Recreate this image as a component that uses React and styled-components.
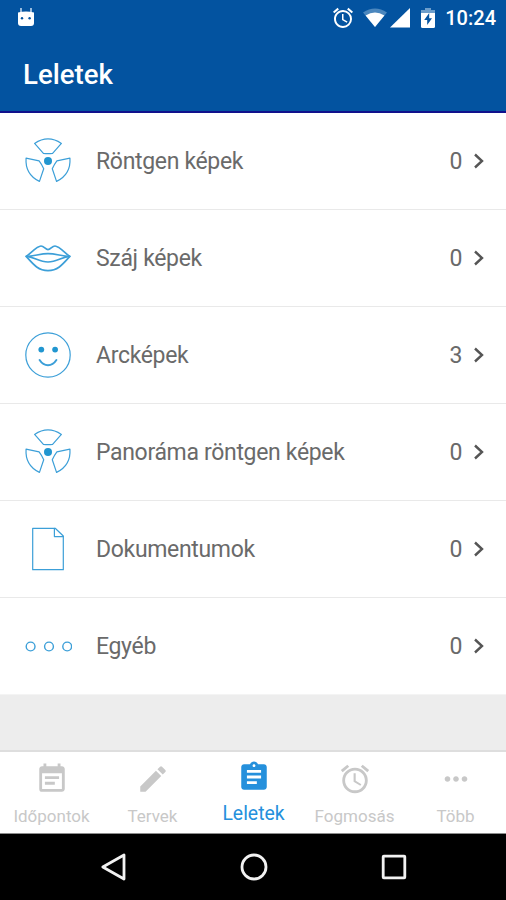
import React, { useState } from 'react'

import styled, { createGlobalStyle } from 'styled-components'
import { MdEventNote, MdEdit, MdAssignment, MdAccessAlarm, MdMoreHoriz } from 'react-icons/md' //Material

const XrayIcon = () => (
  <LineIcon viewBox="-24 -24 48 48">
    {[0, 120, 240].map((deg) => (
      <path key={deg} transform={`rotate(${deg})`} d="M-13.4-17.6Q0-26.6 13.4-17.6L4.6-7.6Q0-7-4.6-7.6Z" />
    ))}
    <circle r="4" fill="#2196d0" stroke="none" />
  </LineIcon>
)

const LipsIcon = () => (
  <LineIcon viewBox="-24 -24 48 48" $width={1.7}>
    <path d="M-21.8-1.6C-17-5-11-12-7-12C-4-12-2.5-8.4 0-8.4S4-12 7-12C11-12 17-5 21.8-1.6C15 6 10 12.6 0 12.6S-15 6-21.8-1.6Z" />
    <path d="M-21.8-1.6C-14-1.6-8-4.4 0-4.4S14-1.6 21.8-1.6C14-1.2 9 4 0 4S-14-1.2-21.8-1.6Z" />
  </LineIcon>
)

const SmileIcon = () => (
  <LineIcon viewBox="-24 -24 48 48">
    <circle r="22.2" />
    <circle cx="-6.7" cy="-5.4" r="2.9" fill="#2196d0" stroke="none" />
    <circle cx="7.1" cy="-5.4" r="2.9" fill="#2196d0" stroke="none" />
    <path d="M-8.4 5Q-5 10.2 0 10.2T8.4 5" strokeWidth="2" />
  </LineIcon>
)

const PageIcon = () => (
  <LineIcon viewBox="-24 -24 48 48">
    <path d="M-15.3-20.7H7.2L15.3-13V20.7H-15.3Z" />
    <path d="M6.4-20.7V-12.4H15.3" />
  </LineIcon>
)

const OtherIcon = () => (
  <LineIcon viewBox="-24 -24 48 48" $width={1.4}>
    <circle cx="-17.4" cy=".5" r="4.4" />
    <circle cx="1" cy=".5" r="4.4" />
    <circle cx="19.2" cy=".5" r="4.4" />
  </LineIcon>
)

const rows = [
  { label: 'Röntgen képek', count: 0, Icon: XrayIcon },
  { label: 'Száj képek', count: 0, Icon: LipsIcon },
  { label: 'Arcképek', count: 3, Icon: SmileIcon },
  { label: 'Panoráma röntgen képek', count: 0, Icon: XrayIcon },
  { label: 'Dokumentumok', count: 0, Icon: PageIcon },
  { label: 'Egyéb', count: 0, Icon: OtherIcon },
]

const tabs = [
  { label: 'Időpontok', Icon: MdEventNote },
  { label: 'Tervek', Icon: MdEdit },
  { label: 'Leletek', Icon: MdAssignment },
  { label: 'Fogmosás', Icon: MdAccessAlarm },
  { label: 'Több', Icon: MdMoreHoriz },
]

function StatusBar() {
  return (
    <StatusContainer>
      <svg width="16" height="20" viewBox="0 0 16 20">
        <path d="M3 0V6M13 0V6" stroke="#a9c6e4" strokeWidth="1.8" />
        <path d="M0 4.5Q8 2.5 16 4.5V15Q16 18 13 18H3Q0 18 0 15Z" fill="#fff" />
        <circle cx="4" cy="10.2" r="1.2" fill="#0353a0" />
        <circle cx="11.6" cy="10.2" r="1.2" fill="#0353a0" />
      </svg>
      <div className="right">
        <MdAccessAlarm className="alarm" />
        <svg className="wifi" width="24" height="20" viewBox="0 0 24 20">
          <path d="M0 4.5Q12-3.5 24 4.5L12 19Z" fill="#4b87be" />
          <path d="M2.6 7.4Q12 1.6 21.4 7.4L12 19Z" fill="#fff" />
        </svg>
        <svg className="signal" width="20" height="20" viewBox="0 0 20 20">
          <path d="M20 0V19.5H0Z" fill="#fff" />
        </svg>
        <svg className="battery" width="14" height="20" viewBox="0 0 14 20">
          <path d="M0 2H4V0H10V2H14V6H0Z" fill="#6d9ecb" />
          <path d="M0 5H14V18.5Q14 20 12.5 20H1.5Q0 20 0 18.5Z" fill="#fff" />
          <path d="M8.2 5L3.2 12H6.2V17L11 10.2H8.2Z" fill="#0353a0" />
        </svg>
        <span>10:24</span>
      </div>
    </StatusContainer>
  )
}

function App() {

  const [active, setActive] = useState('Leletek')

  return (
    <>
      <GlobalStyle />
      <Screen>
        <Header>
          <StatusBar />
          <h1>Leletek</h1>
        </Header>
        <List>
          {rows.map(({ label, count, Icon }) => (
            <Row key={label}>
              <Icon />
              <span className="label">{label}</span>
              <span>{count}</span>
              <Chevron viewBox="0 0 12 16">
                <path d="M2 1.5L9 8L2 14.5" />
              </Chevron>
            </Row>
          ))}
        </List>
        <TabBar>
          {tabs.map(({ label, Icon }) => (
            <Tab key={label} $active={active === label} onClick={() => setActive(label)}>
              <Icon />
              <span>{label}</span>
            </Tab>
          ))}
        </TabBar>
        <SystemNav>
          <svg viewBox="-16 -16 32 32"><path d="M-11.2 0L10-12V12Z" /></svg>
          <svg viewBox="-16 -16 32 32"><circle r="12" /></svg>
          <svg viewBox="-16 -16 32 32"><rect x="-10.8" y="-10.8" width="21.6" height="21.6" rx=".6" /></svg>
        </SystemNav>
      </Screen>
    </>
  )
}

export default App

const GlobalStyle = createGlobalStyle`
  *{
    box-sizing: border-box;
  }
  body{
    margin: 0;
    font-family: Roboto, "Noto Sans", sans-serif;
  }
`

const Screen = styled.div`
  width: 506px;
  height: 900px;
  display: flex;
  flex-direction: column;
  background-color: #ededed;
  overflow: hidden;
`

const Header = styled.header`
  height: 113px;
  flex-shrink: 0;
  background-color: #0353a0;
  border-bottom: 2px solid #10108c;
  color: white;
  h1{
    margin: 0;
    padding-left: 23px;
    line-height: 78px;
    font-size: 27.6px;
    font-weight: 500;
  }
`

const StatusContainer = styled.div`
  height: 36px;
  display: flex;
  justify-content: space-between;
  align-items: center;
  padding: 0 10px 0 18px;
  svg{
    display: block;
  }
  .right{
    display: flex;
    align-items: center;
    font-size: 20px;
    font-weight: 500;
  }
  .alarm{
    width: 24px;
    height: 24px;
  }
  .wifi{
    margin-left: 8px;
  }
  .signal{
    margin-left: 3px;
  }
  .battery{
    margin: 0 10px 0 11px;
  }
`

const List = styled.main`
  flex: 1;
`

const Row = styled.div`
  height: 97px;
  display: flex;
  align-items: center;
  padding: 0 21px 0 24px;
  background-color: white;
  border-bottom: 1px solid #e9e9e9;
  color: #6a6a6a;
  font-size: 23px;
  letter-spacing: -.33px;
  &:last-child{
    border-bottom-color: #f4f4f4;
  }
  .label{
    flex: 1;
    margin-left: 24px;
  }
`

const LineIcon = styled.svg`
  width: 48px;
  height: 48px;
  fill: none;
  stroke: #3c9fd8;
  stroke-width: ${({ $width }) => $width || 1.2};
  stroke-linejoin: round;
  stroke-linecap: round;
`

const Chevron = styled.svg`
  width: 12px;
  height: 16px;
  margin-left: 11px;
  fill: none;
  stroke: #555;
  stroke-width: 2.4;
`

const TabBar = styled.nav`
  height: 83px;
  flex-shrink: 0;
  display: flex;
  padding-left: 1px;
  background-color: white;
  border-top: 2px solid #dedede;
`

const Tab = styled.button`
  flex: 1 1 0;
  display: flex;
  flex-direction: column;
  align-items: center;
  padding: ${({ $active }) => ($active ? '8px' : '10px')} 0 0;
  border: none;
  background: none;
  font-family: inherit;
  color: ${({ $active }) => ($active ? '#2590dc' : '#c8c8c8')};
  font-size: ${({ $active }) => ($active ? '19.4px' : '17px')};
  line-height: 22px;
  svg{
    width: 34px;
    height: 34px;
    margin-bottom: 9px;
  }
`

const SystemNav = styled.footer`
  height: 67px;
  flex-shrink: 0;
  display: flex;
  align-items: center;
  justify-content: space-between;
  padding: 0 96px 0 98px;
  background-color: black;
  border-top: 1px solid #8c8c8c;
  svg{
    width: 32px;
    height: 32px;
    fill: none;
    stroke: #f2f2f2;
    stroke-width: 2.8;
    stroke-linejoin: round;
  }
`
